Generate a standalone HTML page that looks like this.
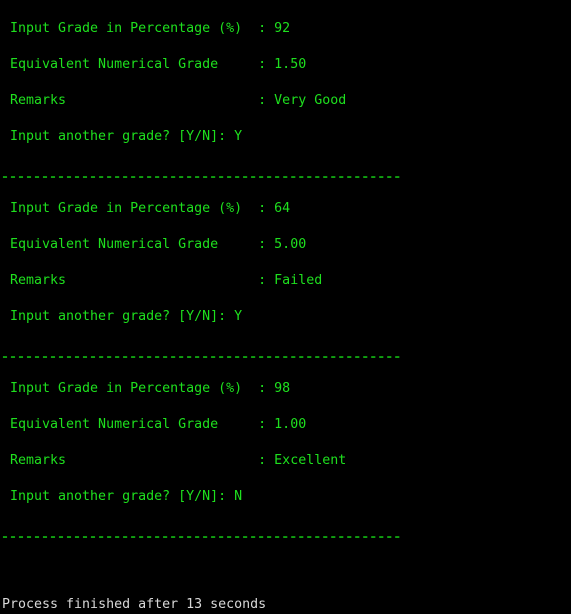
<!DOCTYPE html>
<html><head><meta charset="utf-8"><style>
html,body{margin:0;padding:0;background:#000;width:571px;height:614px;overflow:hidden}
.l{position:absolute;font-family:"DejaVu Sans Mono","Liberation Mono",monospace;font-size:13.3px;line-height:16px;white-space:pre;color:#1ee01e}
.d{color:#10a010;font-weight:bold}
.p{color:#d8d8d8}
</style></head><body>
<div class="l" style="left:10px;top:21px">Input Grade in Percentage (%)  : 92</div>
<div class="l" style="left:10px;top:57px">Equivalent Numerical Grade     : 1.50</div>
<div class="l" style="left:10px;top:93px">Remarks                        : Very Good</div>
<div class="l" style="left:10px;top:129px">Input another grade? [Y/N]: Y</div>
<div class="l d" style="left:1px;top:170px">--------------------------------------------------</div>
<div class="l" style="left:10px;top:201px">Input Grade in Percentage (%)  : 64</div>
<div class="l" style="left:10px;top:237px">Equivalent Numerical Grade     : 5.00</div>
<div class="l" style="left:10px;top:273px">Remarks                        : Failed</div>
<div class="l" style="left:10px;top:309px">Input another grade? [Y/N]: Y</div>
<div class="l d" style="left:1px;top:350px">--------------------------------------------------</div>
<div class="l" style="left:10px;top:381px">Input Grade in Percentage (%)  : 98</div>
<div class="l" style="left:10px;top:417px">Equivalent Numerical Grade     : 1.00</div>
<div class="l" style="left:10px;top:453px">Remarks                        : Excellent</div>
<div class="l" style="left:10px;top:489px">Input another grade? [Y/N]: N</div>
<div class="l d" style="left:1px;top:530px">--------------------------------------------------</div>
<div class="l p" style="left:2px;top:597px">Process finished after 13 seconds</div>
</body></html>
